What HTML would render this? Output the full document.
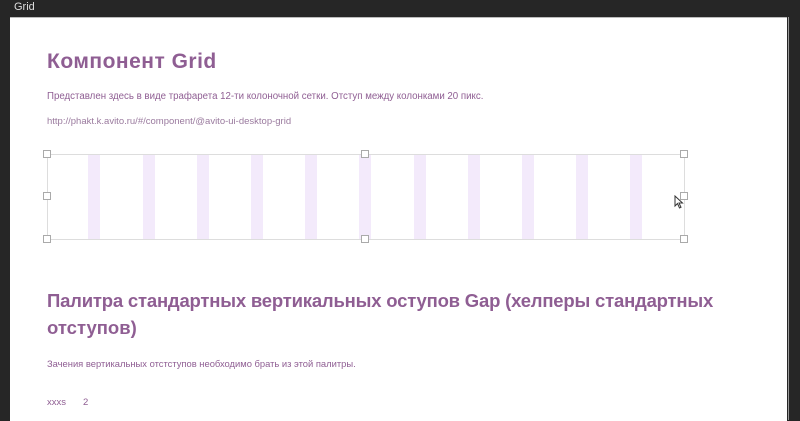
<!DOCTYPE html>
<html><head><meta charset="utf-8"><style>
body{margin:0;width:800px;height:420px;background:#262626;position:relative;overflow:hidden;font-family:"Liberation Sans",sans-serif}
.t{position:absolute;white-space:nowrap;color:#8f5e93}
#page{position:absolute;left:10px;top:17px;width:777px;height:403px;background:#fff;border-top:1px solid #bbb}
#edge{position:absolute;left:788px;top:17px;width:1px;height:403px;background:#999}
.h{font-weight:bold}
.box{position:absolute;left:47px;top:154px;width:636px;height:84px;border:1px solid #ddd}
.s{position:absolute;top:154px;width:12px;height:85px;background:#f3eafb}
.hd{position:absolute;width:6px;height:6px;border:1px solid #aaa;background:#fff}
</style></head><body>
<div class="t" style="left:14px;top:1px;color:#ddd;font-size:11px">Grid</div>
<div id="page"></div><div id="edge"></div>
<div class="t h" style="left:47px;top:50px;font-size:21px;letter-spacing:0.5px">Компонент Grid</div>
<div class="t" style="left:47px;top:91px;font-size:9.7px">Представлен здесь в виде трафарета 12-ти колоночной сетки. Отступ между колонками 20 пикс.</div>
<div class="t" style="left:47px;top:116px;font-size:9.5px;color:#9a7a9e">http://phakt.k.avito.ru/#/component/@avito-ui-desktop-grid</div>
<div class="s" style="left:88px"></div><div class="s" style="left:143px"></div><div class="s" style="left:197px"></div><div class="s" style="left:251px"></div><div class="s" style="left:305px"></div><div class="s" style="left:359px"></div><div class="s" style="left:414px"></div><div class="s" style="left:468px"></div><div class="s" style="left:522px"></div><div class="s" style="left:576px"></div><div class="s" style="left:630px"></div>
<div class="box"></div>
<div class="hd" style="left:43px;top:150px"></div><div class="hd" style="left:361px;top:150px"></div><div class="hd" style="left:680px;top:150px"></div>
<div class="hd" style="left:43px;top:192px"></div><div class="hd" style="left:680px;top:192px"></div>
<div class="hd" style="left:43px;top:235px"></div><div class="hd" style="left:361px;top:235px"></div><div class="hd" style="left:680px;top:235px"></div>
<svg style="position:absolute;left:674px;top:195px" width="10" height="14"><path d="M1 1 L1 11 L3.5 8.5 L5.5 13 L7 12.3 L5 8 L8.5 8 Z" fill="#fff" stroke="#333" stroke-width="1"/></svg>
<div class="t h" style="left:47px;top:290px;font-size:18.5px;letter-spacing:-0.2px">Палитра стандартных вертикальных оступов Gap (хелперы стандартных</div>
<div class="t h" style="left:47px;top:317px;font-size:18.5px">отступов)</div>
<div class="t" style="left:47px;top:358px;font-size:9.4px">Зачения вертикальных отстступов необходимо брать из этой палитры.</div>
<div class="t" style="left:47px;top:397px;font-size:9.5px">xxxs</div>
<div class="t" style="left:83px;top:397px;font-size:9.5px">2</div>
</body></html>
